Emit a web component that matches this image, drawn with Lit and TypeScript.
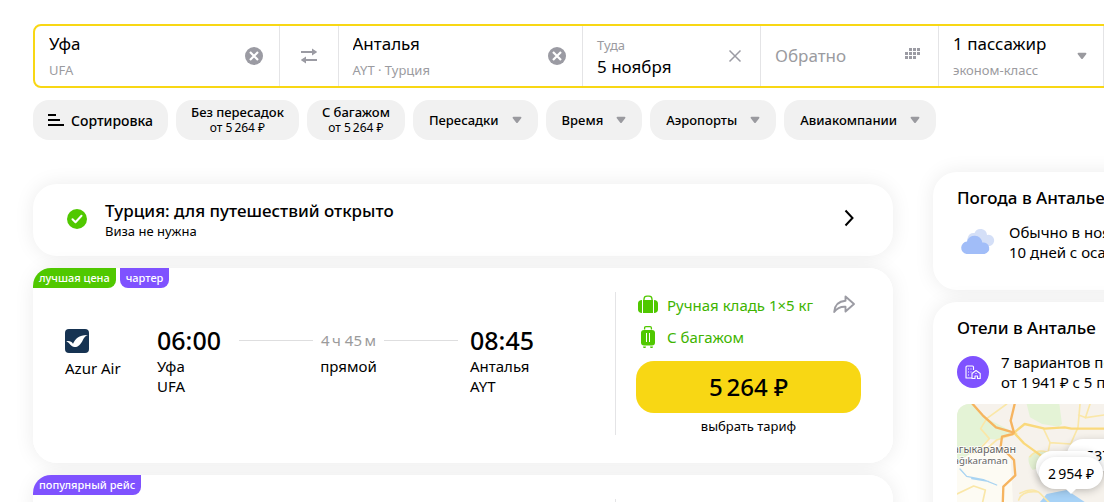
import { LitElement, html, css, svg } from "lit";
import { customElement, property } from "lit/decorators.js";

const arrow = html`<svg width="10" height="8" viewBox="0 0 10 8" aria-hidden="true">
  <path d="M1.5 0.8h7a.9.9 0 0 1 .7 1.5L5.9 6.6a1.2 1.2 0 0 1-1.8 0L.8 2.3A.9.9 0 0 1 1.5.8z" fill="#9a9a9f" />
</svg>`;

const clearIcon = html`<svg width="18" height="18" viewBox="0 0 18 18" aria-hidden="true">
  <circle cx="9" cy="9" r="9" fill="#9b9ba3" />
  <path d="M5 5l8 8M13 5l-8 8" stroke="#fff" stroke-width="2.2" />
</svg>`;

const base = css`
  * {
    box-sizing: border-box;
  }
  button,
  input {
    font: inherit;
    color: inherit;
    margin: 0;
    padding: 0;
    border: 0;
    background: none;
  }
  button {
    cursor: pointer;
  }
  a {
    color: inherit;
    text-decoration: none;
  }
  svg {
    display: block;
    flex: none;
  }
`;

@customElement("search-form")
export class SearchForm extends LitElement {
  static styles = [
    base,
    css`
      :host {
        display: block;
      }
      .form {
        display: grid;
        grid-template-columns: 1fr 59px 1fr 178px 178px 165px 127px;
        height: 64px;
        border: 2px solid #f8d714;
        border-radius: 8px;
        overflow: hidden;
        background: #fff;
      }
      .cell {
        display: flex;
        align-items: center;
        justify-content: space-between;
        min-width: 0;
        padding: 0 16px 0 14px;
        border-right: 1px solid #e4e4e6;
      }
      .cell.date {
        padding-right: 18px;
      }
      .cell.swap {
        justify-content: center;
        padding: 0;
      }
      .field {
        display: flex;
        flex-direction: column;
        flex: 1;
        min-width: 0;
        gap: 4px;
        text-align: left;
      }
      .date .field {
        gap: 0;
      }
      .date .field.filled {
        padding-top: 2px;
      }
      .value {
        width: 100%;
        font-size: 17px;
        line-height: 24px;
        height: 24px;
        outline: none;
        color: #000;
      }
      .value::placeholder {
        color: #9b9ba0;
        opacity: 1;
      }
      .hint {
        font-size: 13px;
        line-height: 20px;
        color: #9b9ba0;
      }
      .submit {
        background: #f8d714;
        font-size: 17px;
      }
    `,
  ];

  render() {
    return html`<form class="form" @submit=${(e: Event) => e.preventDefault()}>
      <div class="cell">
        <div class="field">
          <input class="value" id="from" value="Уфа" />
          <label class="hint" for="from">UFA</label>
        </div>
        <button type="button" aria-label="Очистить">${clearIcon}</button>
      </div>
      <button class="cell swap" type="button" aria-label="Поменять местами">
        <svg width="18" height="16" viewBox="0 0 18 16" fill="none" aria-hidden="true">
          <path d="M1 4h12M17 12H5" stroke="#9b9ba3" stroke-width="2" />
          <path d="M12 0.6L17.3 4L12 7.4zM6 8.6L.7 12L6 15.4z" fill="#9b9ba3" />
        </svg>
      </button>
      <div class="cell">
        <div class="field">
          <input class="value" id="to" value="Анталья" />
          <label class="hint" for="to">AYT · Турция</label>
        </div>
        <button type="button" aria-label="Очистить">${clearIcon}</button>
      </div>
      <div class="cell date">
        <div class="field filled">
          <label class="hint" for="there">Туда</label>
          <input class="value" id="there" value="5 ноября" />
        </div>
        <button type="button" aria-label="Сбросить дату">
          <svg width="14" height="14" viewBox="0 0 14 14" aria-hidden="true">
            <path d="M1.5 1.5l11 11M12.5 1.5l-11 11" stroke="#9b9ba3" stroke-width="1.5" />
          </svg>
        </button>
      </div>
      <div class="cell date">
        <div class="field"><input class="value" placeholder="Обратно" aria-label="Обратно" /></div>
        <button type="button" aria-label="Календарь">
          <svg width="15" height="16" viewBox="0 0 15 16" fill="#9b9ba3" aria-hidden="true">
            ${[
              [1, 2, 3],
              [0, 1, 2, 3],
              [0, 1, 2],
            ].map((row, y) => row.map((x) => svg`<rect x=${x * 4} y=${y * 4} width="3" height="3" />`))}
          </svg>
        </button>
      </div>
      <button class="cell" type="button">
        <span class="field">
          <span class="value">1 пассажир</span>
          <span class="hint">эконом-класс</span>
        </span>
        ${arrow}
      </button>
      <button class="submit" type="submit">Найти</button>
    </form>`;
  }
}

@customElement("flight-card")
export class FlightCard extends LitElement {
  @property({ attribute: false }) badges: { text: string; kind: string }[] = [];

  static styles = [
    base,
    css`
      :host {
        display: block;
      }
      .card {
        position: relative;
        display: grid;
        grid-template-columns: 92px 82px minmax(0, 1fr) 157px 246px;
        padding: 24px 32px 28px;
        background: #fff;
        border-radius: 24px;
        font-size: 15px;
        line-height: 20px;
      }
      .badges {
        position: absolute;
        top: 0;
        left: 0;
        display: flex;
        gap: 4px;
      }
      .badge {
        padding: 0 6px;
        border-radius: 0 0 8px 8px;
        background: #7f52ff;
        color: #fff;
        font-size: 11px;
        font-weight: 500;
        line-height: 20px;
      }
      .badge:first-child {
        border-radius: 18px 0 8px 0;
      }
      .badge.best {
        background: #50c800;
      }
      .airline {
        display: flex;
        flex-direction: column;
        gap: 5px;
        padding-top: 37px;
      }
      .point {
        padding-top: 32px;
      }
      .point.arrival {
        padding-left: 12px;
      }
      .point span {
        display: block;
      }
      .time {
        display: block;
        font-size: 25px;
        line-height: 32px;
        font-weight: 500;
      }
      .middle {
        padding-top: 32px;
        text-align: center;
      }
      .duration {
        display: flex;
        align-items: center;
        gap: 8px;
        line-height: 32px;
        color: #9b9b9b;
      }
      .duration::before,
      .duration::after {
        content: "";
        flex: 1;
        height: 1px;
        background: #dededf;
      }
      .offer {
        display: flex;
        flex-direction: column;
        padding: 1px 0 0 20px;
        border-left: 1px solid #e4e4e6;
      }
      .bag {
        display: flex;
        align-items: center;
        gap: 7px;
        height: 24px;
        margin-bottom: 8px;
        color: #40b400;
      }
      .share {
        margin: 0 5px 0 auto;
      }
      .price {
        height: 52px;
        margin-top: 4px;
        border-radius: 18px;
        background: #f8d714;
        font-size: 24px;
        font-weight: 500;
      }
      .note {
        margin-top: 4px;
        font-size: 13px;
        line-height: 18px;
        text-align: center;
      }
    `,
  ];

  render() {
    return html`<article class="card">
      <div class="badges">
        ${this.badges.map((b) => html`<span class="badge ${b.kind}">${b.text}</span>`)}
      </div>
      <div class="airline">
        <svg width="24" height="24" viewBox="0 0 24 24" aria-hidden="true">
          <rect width="24" height="24" rx="4" fill="#163352" />
          <path d="M1.200 12.200c3-.8 5.400 0 6.800 2.600C10.500 9.500 14 5.800 22.800 6c-2.600 1-3.600 2.400-4.900 4.900-2.400 4.700-4.500 7.100-8.400 7.100C5.800 18 5 13.700 1.200 12.200z" fill="#fff" />
        </svg>
        <span>Azur Air</span>
      </div>
      <div class="point"><time class="time">06:00</time><span>Уфа</span><span>UFA</span></div>
      <div class="middle"><div class="duration">4&thinsp;ч 45&thinsp;м</div>прямой</div>
      <div class="point arrival"><time class="time">08:45</time><span>Анталья</span><span>AYT</span></div>
      <div class="offer">
        <div class="bag">
          <svg width="24" height="24" viewBox="0 0 24 24" fill="#50c800" aria-hidden="true">
            <path d="M8 7V6a3 3 0 0 1 3-2.800h2A3 3 0 0 1 16 6v1" fill="none" stroke="#50c800" stroke-width="1.300" />
            <rect x="7" y="7" width="10" height="13" />
            <path d="M6 7v13C3.500 20 2 18.500 2 16.500v-6C2 8.500 3.500 7 6 7zM18 7v13c2.500 0 4-1.500 4-3.500v-6C22 8.500 20.500 7 18 7z" />
          </svg>
          <span>Ручная кладь 1×5 кг</span>
          <button class="share" aria-label="Поделиться">
            <svg width="24" height="24" viewBox="0 0 24 24" fill="none" aria-hidden="true">
              <path d="M13.500 3.500L22 11l-8.500 7.500v-4.700c-5-.3-8.500 1.200-11.300 5.200 .5-6.400 4.500-10.700 11.300-11.200z" stroke="#9b9ba3" stroke-width="1.900" stroke-linejoin="round" />
            </svg>
          </button>
        </div>
        <div class="bag">
          <svg width="24" height="24" viewBox="0 0 24 24" fill="#50c800" aria-hidden="true">
            <path d="M8.600 4.500V3q0-1.300 1.300-1.300h4.200q1.300 0 1.300 1.300v1.500" fill="none" stroke="#50c800" stroke-width="1.300" />
            <rect x="5" y="5" width="14" height="15.500" rx="3" />
            <path d="M7 21.500h3l-.5 1.500h-2zM14 21.500h3l-.5 1.500h-2z" />
            <path d="M10.500 8v9M13.500 8v9" stroke="#fff" stroke-width="1" />
          </svg>
          <span>С багажом</span>
        </div>
        <button class="price">5&thinsp;264 ₽</button>
        <div class="note">выбрать тариф</div>
      </div>
    </article>`;
  }
}

@customElement("city-map")
export class CityMap extends LitElement {
  static styles = [
    base,
    css`
      :host {
        position: relative;
        display: block;
        height: 190px;
        border-radius: 12px;
        overflow: hidden;
      }
      .ground {
        width: 100%;
        height: 100%;
      }
      .pin {
        position: absolute;
        width: 64px;
        height: 32px;
        border-radius: 16px;
        background: #fff;
        font-size: 14px;
        white-space: nowrap;
        box-shadow: 0 2px 8px rgba(0, 0, 0, 0.2);
      }
      .pin.first {
        left: 110px;
        top: 35px;
      }
      .pin.second {
        left: 79px;
        top: 47px;
      }
      .pin.third {
        left: 82px;
        top: 53px;
      }
      .pin.third::after {
        content: "";
        position: absolute;
        left: 26px;
        top: 31px;
        border: 6px solid transparent;
        border-top-color: #fff;
        border-bottom: 0;
      }
    `,
  ];

  render() {
    return html`
      <svg class="ground" viewBox="141 312 756 570" preserveAspectRatio="xMinYMin slice" aria-hidden="true">
        <rect x="141" y="312" width="756" height="570" fill="#f6f2ec" />
        <path d="M141 480l90-50 70 20 10 200H141z" fill="#fdfbf3" />
        <path d="M141 312h44l50 46 70 36-30 26-40-4-30 30-64 40z" fill="#e4f3d6" />
        <path d="M350 312h98l8 60-10 8-50-8-36-20z" fill="#e4f3d6" />
        <path d="M356 470q20-24 52-14v40l-40 14q-16-20-12-40z" fill="#e4f1d3" />
        <path d="M370 630l40-48 60-12 60 40v268H400z" fill="#a7d2f6" />
        <g fill="none" stroke-linecap="round" stroke-linejoin="round">
          <path d="M150 507l20 22 50 10 40 16M185 536l50 8" stroke="#a9d4f2" stroke-width="4" />
          <g stroke="#fae7a8" stroke-width="5">
            <path d="M290 312l-60 44-18 30 26 30-36 40-20 4M320 400l-60 20-40 35M360 470q20-24 50-14M510 312l-6 70-22 50-62-4-12 60M582 345l-54 8-22-8M330 580q40-20 60 0l30 30M141 582l50-24 35 12-8 36M400 385l20 42M540 312l-14 42M326 600q10-30 60-24" />
          </g>
          <g stroke="#fad97c" stroke-width="7">
            <path d="M312 398l32-26 60 14 60-4 20 4h98M312 398l30 32 50 36" />
          </g>
          <g stroke="#f6b45f" stroke-width="7">
            <path d="M188 312l30 34 40 36 54 16M314 312l-12 50 10 36M308 402l-32 8-4 30 40 40 4 46-36 34-2 60" />
          </g>
        </g>
        <g font-family="Noto Sans, sans-serif" text-anchor="end" fill="#65645f" stroke="#fff" stroke-width="4" paint-order="stroke">
          <text x="318" y="459" font-size="32">Чагыкараман</text>
          <text x="293" y="492" font-size="29">Çağıkaraman</text>
        </g>
      </svg>
      <button class="pin first">3&thinsp;537 ₽</button>
      <button class="pin second" aria-label="Отель"></button>
      <button class="pin third">2&thinsp;954 ₽</button>
    `;
  }
}

@customElement("app-root")
export class AppRoot extends LitElement {
  static styles = [
    base,
    css`
      :host {
        display: block;
        height: 100vh;
        overflow: hidden;
        background: #fff;
        color: #000;
        font-family: "Noto Sans", "Open Sans", sans-serif;
      }
      .page {
        min-width: 1260px;
        padding: 24px 27px 24px 33px;
      }
      .filters {
        display: flex;
        gap: 8px;
        margin-top: 12px;
      }
      .pill {
        display: flex;
        align-items: center;
        gap: 13px;
        height: 40px;
        padding: 0 16px;
        border-radius: 16px;
        background: #f1f1f1;
        font-size: 13px;
        font-weight: 500;
        white-space: nowrap;
      }
      .pill.sort {
        gap: 7px;
        padding: 0 15px;
        font-size: 14px;
      }
      .pill.two {
        flex-direction: column;
        justify-content: center;
        gap: 0;
        padding: 0 15px;
        line-height: 16px;
      }
      .sub {
        font-size: 12px;
        line-height: 16px;
        font-weight: 400;
      }
      .columns {
        display: grid;
        grid-template-columns: minmax(0, 1fr) 300px;
        align-items: start;
        gap: 40px;
        margin-top: 32px;
      }
      .results,
      .side {
        display: flex;
        flex-direction: column;
        gap: 12px;
      }
      .results {
        padding-top: 12px;
      }
      .shadow {
        border-radius: 24px;
        background: #fff;
        box-shadow: 0 0 20px rgba(0, 0, 0, 0.08);
      }
      .notice {
        display: flex;
        align-items: center;
        gap: 18px;
        height: 72px;
        padding: 0 34px 2px;
      }
      .words {
        flex: 1;
      }
      .title {
        margin: 0;
        font-size: 17px;
        line-height: 24px;
        font-weight: 500;
      }
      .small {
        font-size: 13px;
        line-height: 16px;
      }
      .panel {
        padding: 14px 24px 28px;
      }
      .info {
        display: flex;
        align-items: center;
        gap: 12px;
        margin: 12px 0 0;
        font-size: 15px;
        line-height: 20px;
        white-space: nowrap;
      }
      .map {
        margin-top: 12px;
      }
    `,
  ];

  render() {
    return html`<div class="page">
      <search-form></search-form>
      <div class="filters">
        <button class="pill sort">
          <svg width="16" height="12" viewBox="0 0 16 12" aria-hidden="true">
            <path d="M0 1h8M0 6h12M0 11h16" stroke="#000" stroke-width="2" />
          </svg>
          Сортировка
        </button>
        ${["Без пересадок", "С багажом"].map(
          (t) => html`<button class="pill two">${t}<span class="sub">от 5&thinsp;264 ₽</span></button>`
        )}
        ${["Пересадки", "Время", "Аэропорты", "Авиакомпании"].map(
          (t) => html`<button class="pill">${t}${arrow}</button>`
        )}
      </div>
      <div class="columns">
        <main class="results">
          <a class="notice shadow" href="#">
            <svg width="20" height="20" viewBox="0 0 20 20" aria-hidden="true">
              <circle cx="10" cy="10" r="10" fill="#50c800" />
              <path d="M5.500 10.200l3 3 6-6.400" fill="none" stroke="#fff" stroke-width="2" stroke-linecap="round" stroke-linejoin="round" />
            </svg>
            <div class="words">
              <h2 class="title">Турция: для путешествий открыто</h2>
              <div class="small">Виза не нужна</div>
            </div>
            <svg width="20" height="20" viewBox="0 0 20 20" aria-hidden="true">
              <path d="M6.500 1.500l7 7.500-7 7.500" fill="none" stroke="#000" stroke-width="2" />
            </svg>
          </a>
          <flight-card
            class="shadow"
            .badges=${[
              { text: "лучшая цена", kind: "best" },
              { text: "чартер", kind: "" },
            ]}
          ></flight-card>
          <flight-card class="shadow" .badges=${[{ text: "популярный рейс", kind: "" }]}></flight-card>
        </main>
        <aside class="side">
          <section class="panel shadow">
            <h2 class="title">Погода в Анталье</h2>
            <p class="info">
              <svg width="40" height="32" viewBox="0 0 40 32" aria-hidden="true">
                <path d="M15 20a6 6 0 0 1-4-9 6 6 0 0 1 6.500-4 6.500 6.500 0 0 1 12.500 2A5 5 0 0 1 33 20z" fill="#d4dff7" />
                <path d="M9.500 28A6.300 6.300 0 0 1 10 15.500a7.800 7.800 0 0 1 15.300 1A5.800 5.800 0 0 1 27.500 28z" fill="#a1bdf8" />
              </svg>
              <span>Обычно в ноябре +20°<br />10 дней с осадками</span>
            </p>
          </section>
          <section class="panel shadow">
            <h2 class="title">Отели в Анталье</h2>
            <p class="info">
              <svg width="32" height="32" viewBox="0 0 32 32" aria-hidden="true">
                <circle cx="16" cy="16" r="16" fill="#7f52ff" />
                <g fill="none" stroke="#fff" stroke-width="1.100" stroke-linejoin="round">
                  <path d="M15 22H9V11q0-1 1-1h5.500q1 0 1 1v3M15 22.500v-5l4-3 4.200 3v5h-2.700V20H18v2.500z" />
                  <path d="M11 13h1M13.500 13h1M11 16h1M13.500 16h1M11 19h1M18.500 17.500h1" />
                </g>
              </svg>
              <span>7 вариантов по цене<br />от 1&thinsp;941&thinsp;₽ с 5 по 6 ноября</span>
            </p>
            <city-map class="map"></city-map>
          </section>
        </aside>
      </div>
    </div>`;
  }
}
